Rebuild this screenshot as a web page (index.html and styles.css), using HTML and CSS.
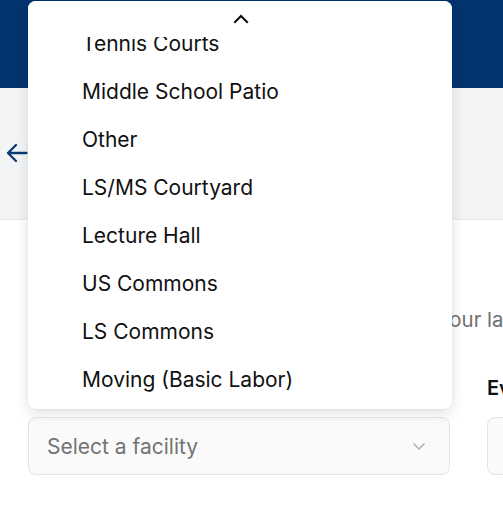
FILE: index.html
```html
<!DOCTYPE html>
<html>
<head>
<meta charset="utf-8">
<link rel="stylesheet" href="styles.css">
</head>
<body>
<header class="topbar"></header>
<section class="subbar">
  <button class="back" aria-label="Back">
    <svg width="22" height="22" viewBox="0 0 22 22" fill="none" stroke="#0b3a6e" stroke-width="2.3" stroke-linecap="round" stroke-linejoin="round"><path d="M20.5 11H2M10 3l-8 8 8 8"/></svg>
  </button>
</section>
<main class="content">
  <p class="intro">Please fill out the request form below with your labor needs.</p>
  <div class="form-grid">
    <div class="field">
      <label class="label">Facility</label>
      <div class="select">
        <span class="placeholder">Select a facility</span>
        <svg class="chev" width="16" height="16" viewBox="0 0 16 16" fill="none" stroke="#b0b0b0" stroke-width="1.6" stroke-linecap="round" stroke-linejoin="round"><path d="M3 6l5 5 5-5"/></svg>
      </div>
    </div>
    <div class="field">
      <label class="label">Event</label>
      <div class="select"></div>
    </div>
  </div>
</main>
<div class="menu">
  <div class="scroll-up">
    <svg width="16" height="12" viewBox="0 0 16 12" fill="none" stroke="#111" stroke-width="2.2" stroke-linecap="square"><path d="M2 9l6-6 6 6"/></svg>
  </div>
  <ul class="options">
    <li>Tennis Courts</li>
    <li>Middle School Patio</li>
    <li>Other</li>
    <li>LS/MS Courtyard</li>
    <li>Lecture Hall</li>
    <li>US Commons</li>
    <li>LS Commons</li>
    <li>Moving (Basic Labor)</li>
  </ul>
</div>
</body>
</html>
```
FILE: styles.css
```css
html, body {
  margin: 0;
  padding: 0;
  width: 503px;
  height: 512px;
  overflow: hidden;
  font-family: Inter, "Noto Sans", sans-serif;
  background: #fff;
}
.topbar {
  height: 88px;
  background: #02346f;
}
.subbar {
  height: 131px;
  background: #f3f4f6;
  border-bottom: 1px solid #e8e9ec;
  display: flex;
  align-items: center;
}
.back {
  border: 0;
  background: none;
  padding: 0;
  margin-left: 6px;
  margin-top: -2px;
  display: flex;
}
.content {
  padding: 0 28px;
}
.intro {
  margin: 86px 0 0 0;
  white-space: nowrap;
  font-size: 20.4px;
  line-height: 28px;
  color: #6f6f6f;
}
.form-grid {
  display: grid;
  grid-template-columns: 422px 422px;
  column-gap: 37px;
  margin-top: 41px;
}
.field {
  display: flex;
  flex-direction: column;
  gap: 16px;
}
.label {
  font-size: 20px;
  line-height: 26px;
  font-weight: 600;
  color: #111;
}
.select {
  height: 58px;
  box-sizing: border-box;
  border: 1px solid #e4e4e4;
  border-radius: 8px;
  background: #fafafa;
  display: flex;
  align-items: center;
  justify-content: space-between;
  padding: 0 22px 0 18px;
}
.placeholder {
  font-size: 21px;
  color: #737373;
}
.chev {
  display: block;
}
.menu {
  position: absolute;
  left: 28px;
  top: 1px;
  width: 424px;
  height: 408px;
  background: #fff;
  border-radius: 8px;
  box-shadow: 0 4px 14px rgba(0,0,0,0.12), 0 0 2px rgba(0,0,0,0.08);
  overflow: hidden;
}
.scroll-up {
  position: absolute;
  left: 0;
  right: 0;
  top: 0;
  height: 36px;
  background: #fff;
  display: flex;
  justify-content: center;
  align-items: center;
  padding-left: 2px;
  z-index: 1;
}
.options {
  list-style: none;
  margin: 18px 0 0 0;
  padding: 0;
}
.options li {
  height: 48px;
  display: flex;
  align-items: center;
  padding-left: 54px;
  font-size: 21px;
  color: #111;
}
```
